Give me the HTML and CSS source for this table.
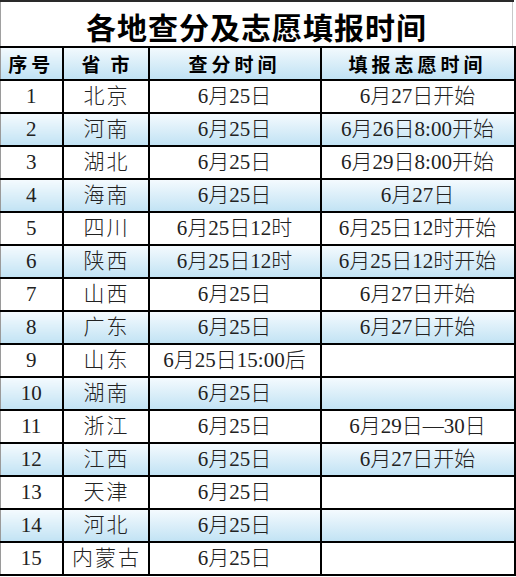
FILE: index.html
```html
<!DOCTYPE html>
<html lang="zh">
<head>
<meta charset="utf-8">
<link rel="stylesheet" href="styles.css">
</head>
<body>
<div class="topbar"></div>
<div class="title">各地查分及志愿填报时间</div>
<table class="grid">
  <colgroup>
    <col class="c1"><col class="c2"><col class="c3"><col class="c4">
  </colgroup>
  <thead>
    <tr class="head"><th>序号</th><th class="wide">省市</th><th>查分时间</th><th>填报志愿时间</th></tr>
  </thead>
  <tbody>
    <tr><td>1</td><td class="prov">北京</td><td>6月25日</td><td>6月27日开始</td></tr>
    <tr class="alt"><td>2</td><td class="prov">河南</td><td>6月25日</td><td>6月26日8:00开始</td></tr>
    <tr><td>3</td><td class="prov">湖北</td><td>6月25日</td><td>6月29日8:00开始</td></tr>
    <tr class="alt"><td>4</td><td class="prov">海南</td><td>6月25日</td><td>6月27日</td></tr>
    <tr><td>5</td><td class="prov">四川</td><td>6月25日12时</td><td>6月25日12时开始</td></tr>
    <tr class="alt"><td>6</td><td class="prov">陕西</td><td>6月25日12时</td><td>6月25日12时开始</td></tr>
    <tr><td>7</td><td class="prov">山西</td><td>6月25日</td><td>6月27日开始</td></tr>
    <tr class="alt"><td>8</td><td class="prov">广东</td><td>6月25日</td><td>6月27日开始</td></tr>
    <tr><td>9</td><td class="prov">山东</td><td>6月25日15:00后</td><td></td></tr>
    <tr class="alt"><td>10</td><td class="prov">湖南</td><td>6月25日</td><td></td></tr>
    <tr><td>11</td><td class="prov">浙江</td><td>6月25日</td><td>6月29日—30日</td></tr>
    <tr class="alt"><td>12</td><td class="prov">江西</td><td>6月25日</td><td>6月27日开始</td></tr>
    <tr><td>13</td><td class="prov">天津</td><td>6月25日</td><td></td></tr>
    <tr class="alt"><td>14</td><td class="prov">河北</td><td>6月25日</td><td></td></tr>
    <tr><td>15</td><td class="prov">内蒙古</td><td>6月25日</td><td></td></tr>
  </tbody>
</table>
</body>
</html>
```
FILE: styles.css
```css
html, body {
  margin: 0;
  padding: 0;
  background: #ffffff;
}
body {
  width: 516px;
  font-family: "Liberation Serif", "Noto Sans CJK SC", serif;
  color: #222;
}
.topbar {
  height: 2px;
  width: 514px;
  background: #2a2a2a;
}
.title {
  height: 44px;
  width: 513px;
  padding-top: 4px;
  border-left: 1px solid #a0a0a0;
  border-right: 1px solid #c8c8c8;
  box-sizing: border-box;
  text-align: center;
  font-family: "Noto Sans CJK SC", sans-serif;
  font-weight: 700;
  font-size: 30px;
  line-height: 40px;
  color: #000;
  letter-spacing: 1px;
}
.grid {
  border-collapse: collapse;
  table-layout: fixed;
  width: 514px;
}
.c1 { width: 62px; }
.c2 { width: 86px; }
.c3 { width: 172px; }
.c4 { width: 194px; }
.grid th, .grid td {
  border: 2px solid #000;
  height: 31px;
  padding: 0;
  text-align: center;
  vertical-align: middle;
  font-size: 21px;
  font-weight: 300;
  line-height: 31px;
  white-space: nowrap;
  overflow: hidden;
}
.grid tr > :first-child {
  border-left: 1px solid #9a9a9a;
}
.head th {
  background: linear-gradient(#f2f9fd, #c0e2f4);
  font-family: "Noto Sans CJK SC", sans-serif;
  font-weight: 700;
  font-size: 19px;
  letter-spacing: 4px;
  color: #000;
}
.head th.wide {
  letter-spacing: 10px;
  text-indent: 10px;
}
.alt td {
  background: linear-gradient(#f4fafe, #c2e3f4);
}
.prov {
  letter-spacing: 2px;
  text-indent: 2px;
}
```
